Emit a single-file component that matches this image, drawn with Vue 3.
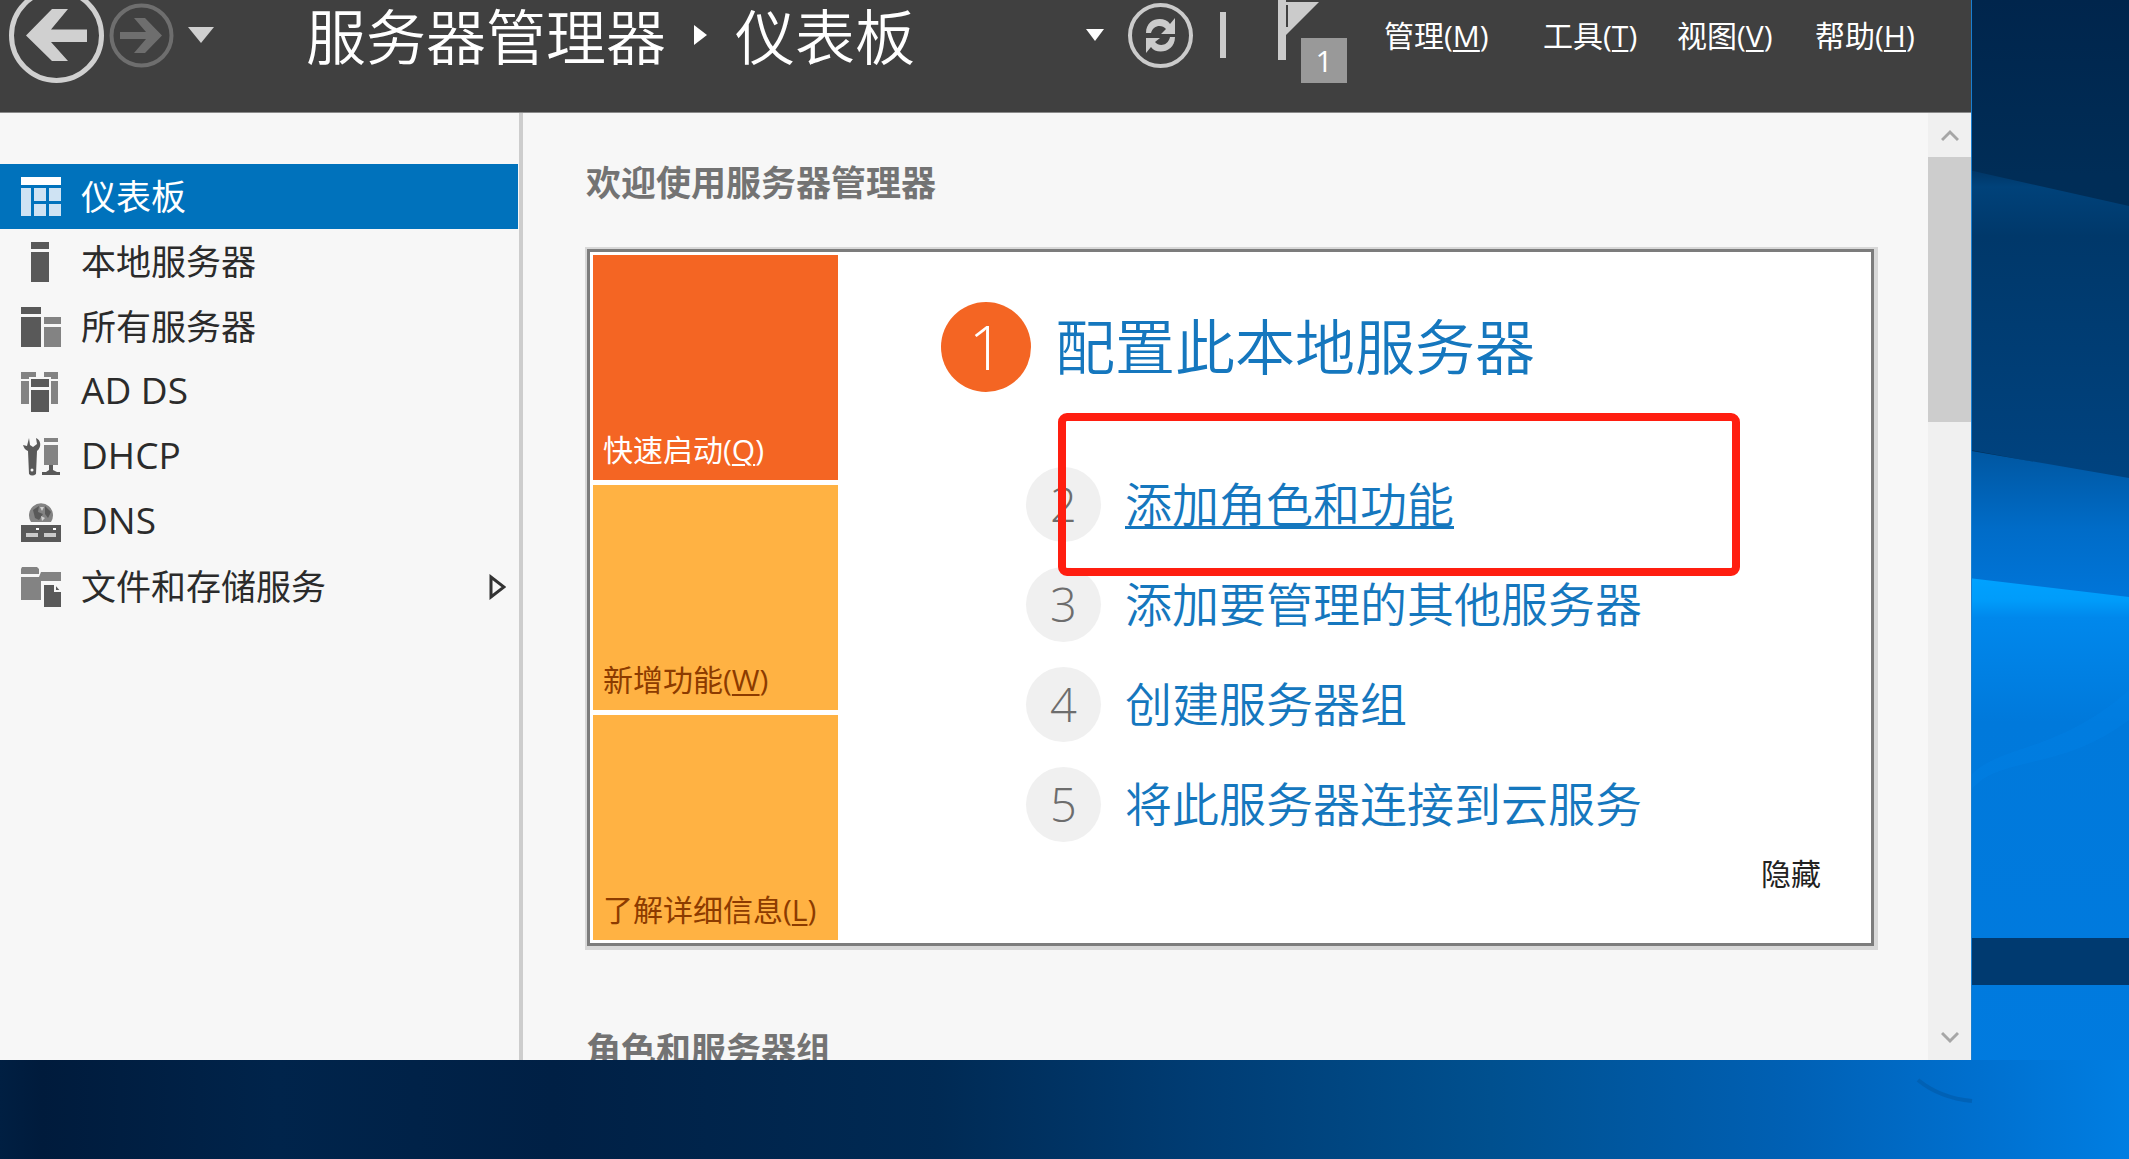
<script setup>
const menus = [
  { label: '管理', key: 'M' },
  { label: '工具', key: 'T' },
  { label: '视图', key: 'V' },
  { label: '帮助', key: 'H' },
]

const navItems = [
  { id: 'dashboard', label: '仪表板', active: true },
  { id: 'local', label: '本地服务器' },
  { id: 'all', label: '所有服务器' },
  { id: 'adds', label: 'AD DS', latin: true },
  { id: 'dhcp', label: 'DHCP', latin: true },
  { id: 'dns', label: 'DNS', latin: true },
  { id: 'files', label: '文件和存储服务', expandable: true },
]

const tiles = [
  { label: '快速启动', key: 'Q', active: true },
  { label: '新增功能', key: 'W' },
  { label: '了解详细信息', key: 'L' },
]

const steps = [
  { n: 2, label: '添加角色和功能', hovered: true },
  { n: 3, label: '添加要管理的其他服务器' },
  { n: 4, label: '创建服务器组' },
  { n: 5, label: '将此服务器连接到云服务' },
]
</script>

<template>
  <div class="desktop">
    <svg class="wallpaper" viewBox="0 0 2129 1159" preserveAspectRatio="none" aria-hidden="true">
      <defs>
        <linearGradient id="night" x1="0" y1="0" x2="0" y2="1">
          <stop offset="0" stop-color="#00254c" />
          <stop offset="0.15" stop-color="#002d57" />
          <stop offset="1" stop-color="#003058" />
        </linearGradient>
        <linearGradient id="dusk" x1="0" y1="0" x2="0" y2="1">
          <stop offset="0" stop-color="#003362" />
          <stop offset="0.06" stop-color="#00427a" />
          <stop offset="0.22" stop-color="#00386a" />
          <stop offset="1" stop-color="#004380" />
        </linearGradient>
        <linearGradient id="beam" x1="0" y1="0" x2="0" y2="1">
          <stop offset="0" stop-color="#0056a0" />
          <stop offset="0.5" stop-color="#006cc8" />
          <stop offset="1" stop-color="#0077dc" />
        </linearGradient>
        <linearGradient id="glow" x1="0" y1="0" x2="0" y2="1">
          <stop offset="0" stop-color="#00a2ff" />
          <stop offset="0.04" stop-color="#009cfa" />
          <stop offset="0.07" stop-color="#0088ec" />
          <stop offset="0.25" stop-color="#0079db" />
          <stop offset="1" stop-color="#007be0" />
        </linearGradient>
        <linearGradient id="floor" x1="0" y1="0" x2="1" y2="0">
          <stop offset="0" stop-color="#001f42" />
          <stop offset="0.02" stop-color="#001b3c" />
          <stop offset="0.13" stop-color="#00244b" />
          <stop offset="0.26" stop-color="#002045" />
          <stop offset="0.44" stop-color="#002a54" />
          <stop offset="0.56" stop-color="#003c73" />
          <stop offset="0.7" stop-color="#00508f" />
          <stop offset="0.84" stop-color="#0060b4" />
          <stop offset="0.93" stop-color="#0070cf" />
          <stop offset="1" stop-color="#007ee2" />
        </linearGradient>
      </defs>
      <rect width="2129" height="1159" fill="url(#night)" />
      <path d="M1960 168 2129 206V480L1960 448Z" fill="url(#dusk)" />
      <path d="M1960 449 2129 478V610H1960Z" fill="url(#beam)" />
      <path d="M1960 577 2129 597V1159H1960Z" fill="url(#glow)" />
      <path d="M1971 775C2000 745 2060 752 2129 690V720C2060 772 2000 755 1971 790Z" fill="#0083e6" opacity="0.4" />
      <rect x="1960" y="938" width="169" height="47" fill="#003a70" />
      <rect y="1060" width="2129" height="99" fill="url(#floor)" />
      <path d="M1918 1080Q1940 1098 1972 1101" fill="none" stroke="#005aa8" stroke-width="4" opacity="0.6" />
    </svg>

    <div class="window">
      <header class="bar">
        <div class="bar-row">
          <button class="icon-btn back" aria-label="后退">
            <svg width="95" height="95" viewBox="0 0 95 95">
              <circle cx="47.500" cy="47.500" r="45" fill="none" stroke="#d0d0d0" stroke-width="5" />
              <path d="M17 47.500 43 21H59L42 41.500H78V54H42L59 73H43Z" fill="#d0d0d0" />
            </svg>
          </button>
          <button class="icon-btn" aria-label="前进" disabled>
            <svg width="65" height="65" viewBox="0 0 65 65">
              <circle cx="32.500" cy="32.500" r="30" fill="none" stroke="#6e6e6e" stroke-width="4" />
              <path d="M53 32.500 36 15H25L37 29H11V36H37L25 50H36Z" fill="#6e6e6e" />
            </svg>
          </button>
          <button class="icon-btn history" aria-label="历史记录">
            <svg width="26" height="16" viewBox="0 0 26 16"><path d="M0 0H26L13 16Z" fill="#d0d0d0" /></svg>
          </button>
          <h1 class="crumbs">
            <span>服务器管理器</span>
            <svg width="13" height="20" viewBox="0 0 13 20"><path d="M0 0 13 10 0 20Z" fill="#fff" /></svg>
            <span>仪表板</span>
          </h1>
          <div class="tools">
            <button class="icon-btn" aria-label="更多">
              <svg width="18" height="12" viewBox="0 0 18 12"><path d="M0 0H18L9 12Z" fill="#fff" /></svg>
            </button>
            <button class="icon-btn refresh" aria-label="刷新">
              <svg width="65" height="65" viewBox="0 0 65 65">
                <circle cx="32.500" cy="32.500" r="30.500" fill="none" stroke="#cbcbcb" stroke-width="4" />
                <g fill="#cbcbcb">
                  <path d="M18 30C18 14 37 13 42 21L47 15V31H33L38 26C34 21 25 22 23 30Z" />
                  <path d="M47 34C47 50 28 52 23 44L18 50V35H32L27 39C31 44 40 43 42 34Z" />
                </g>
              </svg>
            </button>
            <span class="divider"></span>
            <button class="icon-btn flag" aria-label="通知">
              <svg width="69" height="60" viewBox="0 0 69 60">
                <path d="M0 0H8V60H0ZM7 2H41L7 36Z" fill="#cbcbcb" />
                <path d="M9 5V27" stroke="#404040" stroke-width="2" />
              </svg>
              <span class="count">1</span>
            </button>
          </div>
          <nav class="menus">
            <button v-for="m in menus" :key="m.key">{{ m.label }}(<u>{{ m.key }}</u>)</button>
          </nav>
        </div>
      </header>

      <div class="body">
        <nav class="sidebar">
          <a
            v-for="item in navItems"
            :key="item.id"
            href="#"
            class="nav-item"
            :class="{ active: item.active, latin: item.latin }"
          >
            <svg width="40" height="40" viewBox="0 0 40 40" aria-hidden="true">
              <template v-if="item.id === 'dashboard'">
                <path d="M0 0H40V8H0Z" fill="#fff" />
                <path d="M0 11H10V39H0ZM13 11H25V24H13ZM28 11H40V24H28ZM13 27H25V39H13ZM28 27H40V39H28Z" fill="#cfe3f3" />
              </template>
              <path v-else-if="item.id === 'local'" d="M10 0H28V7H10ZM10 10H28V40H10Z" fill="#595959" />
              <template v-else-if="item.id === 'all'">
                <path d="M0 0H20V7H0ZM0 10H20V40H0Z" fill="#595959" />
                <path d="M23 10H40V17H23ZM23 20H40V40H23Z" fill="#838383" />
              </template>
              <template v-else-if="item.id === 'adds'">
                <path d="M0 0H15V5H8V32H0ZM23 0H37V32H30V5H23Z" fill="#838383" />
                <path d="M0 8H8M30 8H37" stroke="#f7f7f7" stroke-width="2" />
                <path d="M10 7H28V15H10ZM10 18H28V40H10Z" fill="#595959" />
              </template>
              <template v-else-if="item.id === 'dhcp'">
                <path d="M8 1 9 8 12 10 16 7 15 1C20 3 21 10 16 14L15 37Q11 40 8 37L7 14C4 13 3 11 2 8L6 9Z" fill="#595959" />
                <circle cx="11" cy="33" r="1.500" fill="#f7f7f7" />
                <path d="M23 1H37V5H23ZM23 8H37V28H23Z" fill="#838383" />
                <path d="M28 28H32V33L36 35H39V38H21V35H25L28 33Z" fill="#595959" />
              </template>
              <template v-else-if="item.id === 'dns'">
                <path d="M10 20A12 12 0 1 1 30 20Z" fill="#838383" />
                <path d="M12 8 18 4 17 10 22 12 18 18 14 16ZM24 4 30 10 27 16 24 12Z" fill="#595959" />
                <path d="M19 5 23 5 21 9ZM20 14 24 16 21 19Z" fill="#d0d0d0" />
                <path d="M0 23H40V40H0Z" fill="#595959" />
                <path d="M5 31H17V35H5ZM23 31H35V35H23Z" fill="#cbcbcb" />
                <path d="M15 26H18V28H15ZM32 26H35V28H32Z" fill="#fff" />
              </template>
              <template v-else>
                <path d="M1 0H16L18 2V7H0V2ZM20 5H40V14H20V33H0V10H18Z" fill="#838383" />
                <path d="M23 18H34L40 25V40H23Z" fill="#595959" />
                <path d="M34 18V24H40" fill="none" stroke="#f7f7f7" stroke-width="2" />
              </template>
            </svg>
            <span class="nav-label">{{ item.label }}</span>
            <svg v-if="item.expandable" width="17" height="26" viewBox="0 0 17 26">
              <path d="M2 3V23L15 13Z" fill="none" stroke="#333" stroke-width="3" />
            </svg>
          </a>
        </nav>

        <main class="content">
          <h2>欢迎使用服务器管理器</h2>
          <section class="welcome">
            <div class="tiles">
              <button v-for="t in tiles" :key="t.key" class="tile" :class="{ active: t.active }">
                {{ t.label }}(<u>{{ t.key }}</u>)
              </button>
            </div>
            <div class="tasks">
              <a href="#" class="primary">
                <span class="badge">1</span>
                <span>配置此本地服务器</span>
              </a>
              <ol class="steps">
                <li v-for="s in steps" :key="s.n">
                  <span class="badge">{{ s.n }}</span>
                  <a href="#" :class="{ hovered: s.hovered }">{{ s.label }}</a>
                  <span v-if="s.hovered" class="marker"></span>
                </li>
              </ol>
              <button class="hide">隐藏</button>
            </div>
          </section>
          <h2>角色和服务器组</h2>
        </main>

        <div class="scrollbar">
          <button class="icon-btn arrow" aria-label="向上滚动">
            <svg width="18" height="14" viewBox="0 0 18 14"><path d="M1 12 9 4 17 12" fill="none" stroke="#a6a6a6" stroke-width="3" /></svg>
          </button>
          <div class="thumb"></div>
          <button class="icon-btn arrow" aria-label="向下滚动">
            <svg width="18" height="14" viewBox="0 0 18 14"><path d="M1 2 9 10 17 2" fill="none" stroke="#a6a6a6" stroke-width="3" /></svg>
          </button>
        </div>
      </div>
    </div>
  </div>
</template>

<style>
body {
  margin: 0;
  overflow: hidden;
}
</style>

<style scoped>
* {
  box-sizing: border-box;
}
.desktop {
  position: relative;
  display: flex;
  height: 100vh;
  padding: 0 157px 99px 0;
  background: #00234a;
  font-family: "Open Sans", "Noto Sans CJK SC", sans-serif;
  font-size: 30px;
}
button {
  padding: 0;
  border: 0;
  background: none;
  color: inherit;
  font: inherit;
}
a {
  color: inherit;
  text-decoration: none;
}
svg {
  display: block;
  flex: none;
}
u {
  text-underline-offset: 3px;
  text-decoration-thickness: 2px;
}
.wallpaper {
  position: absolute;
  inset: 0;
  width: 100%;
  height: 100%;
}
.window {
  position: relative;
  flex: 1;
  min-width: 0;
  display: flex;
  flex-direction: column;
  overflow: hidden;
  border-right: 1px solid #1a7fd0;
  background: #f7f7f7;
}
.bar {
  flex: none;
  height: 113px;
  border-bottom: 1px solid #8a8a8a;
  background: #404040;
  color: #fff;
}
.bar-row {
  display: flex;
  align-items: center;
  height: 70px;
  padding: 0 54px 0 9px;
}
.icon-btn {
  display: flex;
  align-items: center;
  justify-content: center;
  flex: none;
}
.back {
  margin-right: 5px;
}
.history {
  margin-left: 14px;
}
.crumbs {
  flex: 1;
  display: flex;
  align-items: center;
  gap: 28px;
  margin: 0 0 0 92px;
  font-size: 60px;
  font-weight: 350;
  line-height: 74px;
  white-space: nowrap;
}
.crumbs span {
  padding-top: 4px;
}
.tools {
  display: flex;
  align-items: center;
  align-self: stretch;
}
.refresh {
  margin: 0 27px 0 24px;
}
.divider {
  width: 6px;
  height: 46px;
  background: #cbcbcb;
}
.flag {
  position: relative;
  margin: 0 37px 0 52px;
  align-self: flex-start;
}
.count {
  position: absolute;
  right: 0;
  top: 38px;
  width: 46px;
  height: 45px;
  background: #999;
  line-height: 45px;
  text-align: center;
}
.menus {
  display: grid;
  grid-template-columns: 159px 134px 138px 102px;
  justify-items: start;
  padding-top: 2px;
  line-height: 40px;
  white-space: nowrap;
}
.body {
  flex: 1;
  display: flex;
  min-height: 0;
}
.sidebar {
  flex: none;
  width: 523px;
  padding-top: 51px;
  border-right: 4px solid #cdcdcd;
  color: #2b2b2b;
  font-size: 35px;
}
.nav-item {
  display: flex;
  align-items: center;
  gap: 20px;
  height: 65px;
  margin-right: 1px;
  padding: 0 12px 0 21px;
}
.nav-item.active {
  background: #0072bc;
  color: #fff;
}
.nav-item.latin {
  font-size: 37px;
}
.nav-item.latin .nav-label {
  padding-bottom: 4px;
}
.nav-label {
  flex: 1;
  line-height: 48px;
}
.content {
  flex: 1;
  min-width: 0;
  overflow: hidden;
  padding: 46px 54px 0 63px;
}
h2 {
  margin: 0;
  color: #737373;
  font-size: 35px;
  font-weight: 700;
  line-height: 48px;
}
.welcome {
  display: flex;
  margin: 42px 0 80px 1px;
  padding: 3px;
  border: 3px solid #7c7c7c;
  background: #fff;
  box-shadow: 1px 1px 0 3px #d8d8d8;
}
.tiles {
  flex: none;
  display: flex;
  flex-direction: column;
  gap: 5px;
  width: 245px;
}
.tile {
  display: flex;
  align-items: flex-end;
  height: 225px;
  padding: 0 0 10px 10px;
  background: #ffb243;
  color: #8c3b00;
  line-height: 40px;
  white-space: nowrap;
}
.tile.active {
  background: #f46523;
  color: #fff;
}
.tasks {
  flex: 1;
  display: flex;
  flex-direction: column;
  padding: 47px 47px 44px 103px;
  color: #1577be;
  font-weight: 350;
  white-space: nowrap;
}
.primary {
  display: flex;
  align-items: center;
  gap: 24px;
  font-size: 60px;
  line-height: 90px;
}
.badge {
  flex: none;
  border-radius: 50%;
  font-weight: 300;
  text-align: center;
}
.primary .badge {
  width: 90px;
  height: 90px;
  background: #f46523;
  color: #fff;
}
.steps {
  display: flex;
  flex-direction: column;
  gap: 25px;
  margin: 75px 0 0 85px;
  padding: 0;
  list-style: none;
  font-size: 47px;
  line-height: 75px;
}
.steps li {
  position: relative;
  display: flex;
  gap: 24px;
}
.steps .badge {
  width: 75px;
  height: 75px;
  background: #f0f0f0;
  color: #6d6d6d;
}
.hovered {
  text-decoration: underline;
  text-decoration-thickness: 3px;
  text-underline-offset: 4px;
}
.marker {
  position: absolute;
  z-index: 1;
  left: 32px;
  top: -54px;
  width: 682px;
  height: 163px;
  border: 8px solid #ff1e10;
  border-radius: 9px;
}
.hide {
  align-self: flex-end;
  margin-top: 12px;
  color: #222;
  font-weight: 400;
  line-height: 40px;
}
.scrollbar {
  flex: none;
  display: flex;
  flex-direction: column;
  width: 43px;
  background: #f0f0f0;
}
.arrow {
  height: 44px;
}
.thumb {
  flex: none;
  height: 265px;
  margin-bottom: auto;
  background: #cdcdcd;
}
</style>
